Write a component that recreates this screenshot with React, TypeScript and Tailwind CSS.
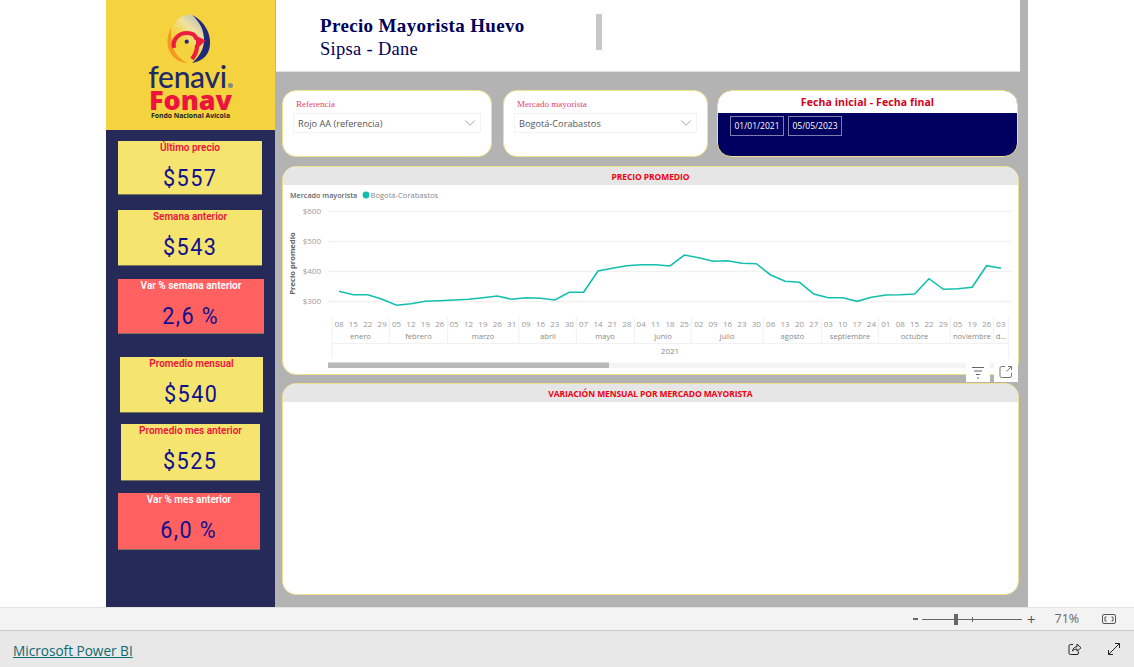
import { ChevronDown } from "lucide-react";

const SANS = "font-['Open_Sans','Liberation_Sans',sans-serif]";

// y of the line in page pixels, one per tick
const lineY = [
  291.3, 294.7, 294.7, 299.3, 305.3, 303.7, 301.3, 300.7, 300, 299.3, 297.7, 296, 299.3, 297.7, 298.3, 300,
  292.3, 292.3, 271, 268.3, 265.7, 264.7, 264.7, 266, 255, 257.7, 261.3, 260.7, 263.3, 263.7, 275, 281.3,
  282.3, 294, 297.7, 297.7, 301.3, 297.3, 295, 294.7, 294, 278.7, 289.3, 288.7, 287.3, 265.7, 268.3,
];

const ticks = [
  "08", "15", "22", "29", "05", "12", "19", "26", "05", "12", "19", "26", "31", "09", "16", "23", "30", "07", "14",
  "21", "28", "04", "11", "18", "25", "02", "09", "16", "23", "30", "06", "13", "20", "27", "03", "10", "17", "24",
  "01", "08", "15", "22", "29", "05", "19", "26", "03",
];

const months = [
  { name: "enero", x: 360.5 },
  { name: "febrero", x: 418.5 },
  { name: "marzo", x: 483 },
  { name: "abril", x: 548 },
  { name: "mayo", x: 605 },
  { name: "junio", x: 663 },
  { name: "julio", x: 727 },
  { name: "agosto", x: 792.5 },
  { name: "septiembre", x: 850 },
  { name: "octubre", x: 914.5 },
  { name: "noviembre", x: 972 },
  { name: "d...", x: 1001 },
];

const monthLines = [389.3, 447.7, 519, 576.3, 634.3, 691.3, 763.3, 821.7, 878.3, 950.3, 993.7];

const tickX = (i: number) => 339 + i * 14.39;

const Logo = () => (
  <div className="flex h-[130px] flex-col items-center bg-[#f5d33f] pt-[13px]">
    <svg width="47" height="50" viewBox="0 0 47 50" className="-ml-[4px]">
      <defs>
        <linearGradient id="egg" x1="0.75" y1="0" x2="0.35" y2="0.55">
          <stop offset="0" stopColor="#bdbdb8" />
          <stop offset="0.5" stopColor="#efe2a0" />
          <stop offset="1" stopColor="#f5d33f" />
        </linearGradient>
      </defs>
      <path d="M27 2 C16 0 7 10 5 22 C4 36 12 47 24 50 C36 48 42 38 42 27 C41 14 35 5 27 2 Z" fill="url(#egg)" />
      <path d="M6 15 C2 23 1 32 5 39 C9 46 15 50 22 50 C14 46 8 38 7 30 C6 25 6 20 6 15 Z" fill="#f39a1f" />
      <path d="M27 2 C40 8 46 21 45 32 C44 42 38 48 27 50 C34 44 39 36 39 27 C39 16 34 8 27 2 Z" fill="#1f2a78" />
      <path
        d="M9 35 C7 26 14 20 22 20 C27 20 30 22 31 25 L37 28 L32 33 C32 38 30 42 27 46"
        fill="none"
        stroke="#ee1c3e"
        strokeWidth="4.2"
      />
      <path d="M31 24 L38 28 L31 35 Z" fill="#ee1c3e" />
      <circle cx="21.7" cy="28.7" r="2.1" fill="#1f2a78" />
    </svg>
    <div className="flex h-[26px] items-end font-['Lato',sans-serif] text-[30px] leading-[26px] font-medium tracking-[-0.3px] text-[#1f2a6b]">
      fenavi<span className="mb-[1px] ml-px h-[5px] w-[5px] rounded-full bg-[#8b8b7a]" />
    </div>
    <div className="h-[22px] font-['Open_Sans',sans-serif] text-[27px] leading-[22px] font-extrabold text-[#ee123e]">
      Fonav
    </div>
    <div className={`${SANS} text-[6.8px] leading-[9px] font-bold text-[#222]`}>Fondo Nacional Avícola</div>
  </div>
);

const Kpi = ({ className, title, value, red }: { className: string; title: string; value: string; red?: boolean }) => (
  <div
    className={`flex flex-col items-center border-b border-[#77765a] ${red ? "bg-[#ff6060]" : "bg-[#f5e56f]"} ${className}`}
  >
    <div
      className={`mt-px font-['Roboto',sans-serif] text-[10px] leading-[12px] font-semibold ${red ? "text-white" : "text-[#f0103c]"}`}
    >
      {title}
    </div>
    <div className="mt-[9px] scale-x-90 font-['Roboto',sans-serif] text-[24px] leading-[30px] tracking-[1.6px] text-[#10108f]">
      {value}
    </div>
  </div>
);

const Sidebar = () => (
  <div className="flex w-[169px] flex-col bg-[#252a58]">
    <Logo />
    <Kpi className="mt-[11px] ml-[12px] h-[54px] w-[144px]" title="Último precio" value="$557" />
    <Kpi className="mt-[15px] ml-[12px] h-[56px] w-[144px]" title="Semana anterior" value="$543" />
    <Kpi className="mt-[13px] ml-[12px] h-[55px] w-[146px]" title="Var % semana anterior" value="2,6 %" red />
    <Kpi className="mt-[23px] ml-[14px] h-[56px] w-[143px]" title="Promedio mensual" value="$540" />
    <Kpi className="mt-[11px] ml-[15px] h-[57px] w-[139px]" title="Promedio mes anterior" value="$525" />
    <Kpi className="mt-[12px] ml-[12px] h-[57px] w-[142px]" title="Var % mes anterior" value="6,0 %" red />
  </div>
);

const Slicer = ({ label, value, width, labelPad }: { label: string; value: string; width: string; labelPad: string }) => (
  <div className={`h-[67px] rounded-[14px] border border-[#efe08c] bg-white ${width}`}>
    <div
      className={`mt-[6px] h-[14px] ${labelPad} font-['Liberation_Serif',serif] text-[9px] leading-[14px] text-[#e8406f]`}
    >
      {label}
    </div>
    <div className="mx-[10px] mt-[2px] flex h-[20px] items-center justify-between border border-[#f3f3f3] pr-[1px] pl-[4px]">
      <span className={`${SANS} pt-[1px] text-[9.2px] text-[#555]`}>{value}</span>
      <ChevronDown size={18} strokeWidth={0.9} className="text-[#777]" />
    </div>
  </div>
);

const DateBox = ({ value }: { value: string }) => (
  <div
    className={`${SANS} flex h-[20px] w-[54px] items-center justify-center border-[1.5px] border-[#7c7cae] text-[8.5px] text-white`}
  >
    {value}
  </div>
);

const DateSlicer = () => (
  <div className="flex h-[67px] w-[301px] flex-col overflow-hidden rounded-[14px] border border-[#efe08c] bg-[#000060]">
    <div
      className={`${SANS} h-[22px] bg-white text-center text-[10.5px] leading-[22px] font-bold tracking-[0.1px] text-[#d4001a]`}
    >
      Fecha inicial - Fecha final
    </div>
    <div className="mt-[3px] ml-[12px] flex gap-[4px]">
      <DateBox value="01/01/2021" />
      <DateBox value="05/05/2023" />
    </div>
  </div>
);

const LineChart = () => (
  <svg width="735" height="189" viewBox="283 185 735 189" className={SANS}>
    <text x="290" y="198" fontSize="7.2" fontWeight="600" fill="#666">
      Mercado mayorista
    </text>
    <circle cx="366" cy="195" r="3.4" fill="#12bfae" />
    <text x="370.5" y="198" fontSize="7.6" fill="#888">
      Bogotá-Corabastos
    </text>

    {[
      { y: 211.5, label: "$600" },
      { y: 241.5, label: "$500" },
      { y: 271.5, label: "$400" },
      { y: 301.5, label: "$300" },
    ].map((g) => (
      <g key={g.label}>
        <line x1="328" x2="1012" y1={g.y} y2={g.y} stroke="#f1f1f1" strokeWidth="1.3" />
        <text x="321" y={g.y + 2.8} textAnchor="end" fontSize="8" fill="#999">
          {g.label}
        </text>
      </g>
    ))}
    <text transform="translate(295 263.5) rotate(-90)" textAnchor="middle" fontSize="7.6" fontWeight="700" fill="#666">
      Precio promedio
    </text>

    <polyline
      points={lineY.map((y, i) => `${tickX(i)},${y}`).join(" ")}
      fill="none"
      stroke="#12bfae"
      strokeWidth="1.6"
    />

    {ticks.map((t, i) => (
      <text key={i} x={tickX(i)} y="327" textAnchor="middle" fontSize="8" fill="#999">
        {t}
      </text>
    ))}
    {months.map((m) => (
      <text key={m.name} x={m.x} y="339" textAnchor="middle" fontSize="7.6" fill="#888">
        {m.name}
      </text>
    ))}
    <text x="670" y="353.5" textAnchor="middle" fontSize="8" fill="#888">
      2021
    </text>

    <line x1="332" x2="332" y1="317" y2="358" stroke="#f1f1f1" />
    <line x1="1008.7" x2="1008.7" y1="317" y2="358" stroke="#f1f1f1" />
    <line x1="332" x2="1008.7" y1="343.5" y2="343.5" stroke="#f1f1f1" />
    {monthLines.map((x) => (
      <line key={x} x1={x} x2={x} y1="317" y2="343" stroke="#f1f1f1" />
    ))}

    <rect x="328" y="362.5" width="684" height="5.5" fill="#f4f4f4" />
    <rect x="328" y="362.5" width="281" height="5.5" fill="#b8b8b8" />
  </svg>
);

const ChartCard = ({ title, height, children }: { title: string; height: string; children?: React.ReactNode }) => (
  <div className={`relative w-[737px] overflow-hidden rounded-[14px] border border-[#efe08c] bg-white ${height}`}>
    <div
      className={`${SANS} h-[18px] bg-[#e6e6e6] text-center text-[8.5px] leading-[19px] font-bold tracking-[-0.1px] text-[#f00010]`}
    >
      {title}
    </div>
    {children}
  </div>
);

const VisualIcons = () => (
  <div className="absolute top-[362px] left-[966px] flex gap-[4px]">
    <div className="flex h-[20px] w-[24px] items-center justify-center bg-white">
      <svg width="14" height="13" viewBox="0 0 14 13" fill="none" stroke="#666" strokeWidth="1">
        <path d="M1 1.5 H13 M3 5 H11 M5 8.5 H9 M6 12 H8" />
      </svg>
    </div>
    <div className="flex h-[20px] w-[24px] items-center justify-center bg-white">
      <svg width="14" height="14" viewBox="0 0 14 14" fill="none" stroke="#777" strokeWidth="1">
        <path d="M6 1.5 H2.5 Q1 1.5 1 3 V11 Q1 12.5 2.5 12.5 H11 Q12.5 12.5 12.5 11 V8" />
        <path d="M7.5 6.5 L12.5 1.5 M9 1.5 H12.5 V5" />
      </svg>
    </div>
  </div>
);

const ZoomBar = () => (
  <div className="flex h-[24px] items-center border-t border-b border-t-[#e2e2e2] border-b-[#c8c8c8] bg-[#f3f3f3] pl-[913px]">
    <div className="h-[2px] w-[5px] bg-[#666]" />
    <div className="relative ml-[4px] h-px w-[100px] bg-[#666]">
      <div className="absolute top-[-5px] left-[32px] h-[11px] w-[4px] bg-[#666]" />
      <div className="absolute top-[-2px] left-[50px] h-[5px] w-px bg-[#666]" />
    </div>
    <span className={`${SANS} ml-[5px] text-[15px] leading-none text-[#555]`}>+</span>
    <span className={`${SANS} ml-[19px] text-[12.5px] text-[#666]`}>71%</span>
    <svg width="14" height="10" viewBox="0 0 14 10" fill="none" stroke="#555" className="ml-[23px]">
      <rect x="0.5" y="0.5" width="13" height="9" rx="1.5" />
      <path d="M4.5 3 H3 V7 H4.5 M9.5 3 H11 V7 H9.5" />
    </svg>
  </div>
);

const Footer = () => (
  <div className="flex h-[36px] items-center bg-[#e8e8e8] px-[13px] pt-[4px]">
    <a className={`${SANS} text-[13.6px] text-[#0e6a70] underline`}>Microsoft Power BI</a>
    <svg width="14" height="14" viewBox="0 0 14 14" fill="none" stroke="#222" className="-mt-[4px] ml-auto">
      <path d="M5 2.5 H2.5 Q1 2.5 1 4 V11 Q1 12.5 2.5 12.5 H9 Q10.5 12.5 10.5 11 V9.5" />
      <path d="M4.5 9 C5 6 7 4.8 9 4.8 V2 L13 5.8 L9 9.2 V7 C7.5 7 6 7.5 4.5 9 Z" />
    </svg>
    <svg width="14" height="14" viewBox="0 0 14 14" fill="none" stroke="#222" className="-mt-[4px] ml-[25px]">
      <path d="M1.5 12.5 L12.5 1.5 M8 1.5 H12.5 V6 M1.5 8 V12.5 H6" />
    </svg>
  </div>
);

export default function App() {
  return (
    <div className="relative flex h-[667px] w-[1134px] flex-col overflow-hidden bg-white">
      <div className="ml-[106px] flex h-[607px] w-[922px]">
        <Sidebar />
        <div className="flex flex-1 flex-col bg-[#b3b3b3] pl-px">
          <div className="flex h-[72px] w-[744px] border-b border-[#e0e0e0] bg-white pt-[14px] pl-[44px]">
            <div className="w-[276px] font-['Liberation_Serif',serif] text-[#00005a]">
              <div className="text-[19px] leading-[24px] font-bold tracking-[0.35px]">Precio Mayorista Huevo</div>
              <div className="text-[18.5px] leading-[23px] tracking-[0.3px]">Sipsa - Dane</div>
            </div>
            <div className="h-[36px] w-[6px] bg-[#c8c8c8]" />
          </div>
          <div className="mt-[18px] ml-[6px] flex gap-[11px]">
            <Slicer label="Referencia" value="Rojo AA (referencia)" width="w-[210px]" labelPad="pl-[13px]" />
            <Slicer label="Mercado mayorista" value="Bogotá-Corabastos" width="w-[205px]" labelPad="pl-[13px]" />
            <div className="-ml-[2px]">
              <DateSlicer />
            </div>
          </div>
          <div className="mt-[9px] ml-[6px]">
            <ChartCard title="PRECIO PROMEDIO" height="h-[209px]">
              <LineChart />
            </ChartCard>
          </div>
          <div className="mt-[8px] ml-[6px]">
            <ChartCard title="VARIACIÓN MENSUAL POR MERCADO MAYORISTA" height="h-[212px]" />
          </div>
        </div>
      </div>
      <ZoomBar />
      <Footer />
      <VisualIcons />
    </div>
  );
}
